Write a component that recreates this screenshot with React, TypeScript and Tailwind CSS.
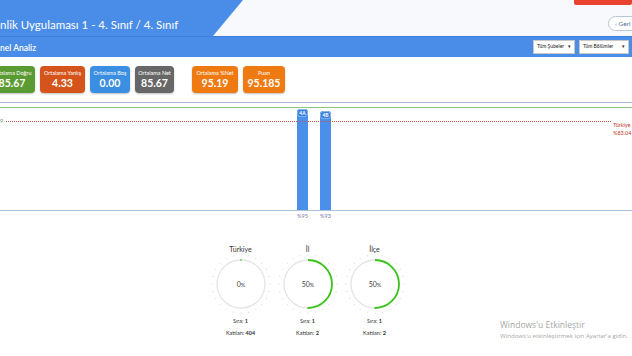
import { FC } from "react";

interface IStat {
  label: string;
  value: string;
  bg: string;
  w: string;
}

const stats: IStat[] = [
  { label: "Ortalama Doğru", value: "85.67", bg: "bg-[#5b9b33]", w: "w-[46px]" },
  { label: "Ortalama Yanlış", value: "4.33", bg: "bg-[#d5541b]", w: "w-[45px]" },
  { label: "Ortalama Boş", value: "0.00", bg: "bg-[#3b8fe2]", w: "w-[40px]" },
  { label: "Ortalama Net", value: "85.67", bg: "bg-[#676767]", w: "w-[39px]" },
];

const stats2: IStat[] = [
  { label: "Ortalama %Net", value: "95.19", bg: "bg-[#f07a12]", w: "w-[46px]" },
  { label: "Puan", value: "95.185", bg: "bg-[#f07a12]", w: "w-[42px]" },
];

const StatCard: FC<IStat> = ({ label, value, bg, w }) => (
  <div
    className={`${bg} ${w} h-[27px] shrink-0 rounded-[4px] flex flex-col items-center justify-center text-white shadow-[0_1px_2px_rgba(0,0,0,0.25)]`}
  >
    <span className="text-[5.5px] leading-[8px] whitespace-nowrap">{label}</span>
    <span className="text-[10.5px] leading-[13px] font-bold">{value}</span>
  </div>
);

interface IGauge {
  label: string;
  pct: number;
  sira: string;
  katilan: string;
}

const Gauge: FC<IGauge> = ({ label, pct, sira, katilan }) => {
  const r = 24;
  const c = 2 * Math.PI * r;
  const ticks = Array.from({ length: 24 }, (_, i) => i * 15);
  return (
    <div className="w-[67px] flex flex-col items-center text-[#333]">
      <div className="text-[7px] leading-[10px]">{label}</div>
      <svg width="64" height="64" viewBox="0 0 64 64" className="-mt-[2px]">
        {ticks.map((a) => (
          <line
            key={a}
            x1="32"
            y1="2"
            x2="32"
            y2="3.5"
            stroke="#dcdcdc"
            strokeWidth="0.8"
            transform={`rotate(${a} 32 32)`}
          />
        ))}
        <circle cx="32" cy="32" r={r} fill="none" stroke="#e6e6e6" strokeWidth="1.4" />
        {pct > 0 ? (
          <circle
            cx="32"
            cy="32"
            r={r}
            fill="none"
            stroke="#3cc31c"
            strokeWidth="1.8"
            strokeDasharray={`${(c * pct) / 100} ${c}`}
            transform="rotate(-90 32 32)"
          />
        ) : (
          <line x1="32" y1="7" x2="32" y2="9" stroke="#3cc31c" strokeWidth="1" />
        )}
        <text x="32" y="34.5" textAnchor="middle" fontSize="7" fill="#444" fontFamily="Lato, sans-serif">
          {pct}
          <tspan fontSize="5.5">%</tspan>
        </text>
      </svg>
      <div className="mt-[1px] text-[5.5px] leading-[8px]">
        Sıra: <b>{sira}</b>
      </div>
      <div className="mt-[4px] text-[5.5px] leading-[8px]">
        Katılan: <b>{katilan}</b>
      </div>
    </div>
  );
};

const Bar: FC<{ name: string; h: string }> = ({ name, h }) => (
  <div className={`w-[11px] ${h} bg-[#4a8fea] rounded-t-[3px] flex flex-col items-center`}>
    <div className="w-[11px] h-[8px] rounded-[3px] bg-[#3b7fdc] border border-[#7fb0f0] text-white text-[5px] leading-[6px] font-bold text-center">
      {name}
    </div>
  </div>
);

export default function App() {
  return (
    <div className="relative w-[632px] h-[356px] overflow-hidden bg-white font-['Lato',sans-serif]">
      {/* title bar */}
      <div className="h-[36px] flex bg-[#f7f9fc]">
        <div className="w-[243px] shrink-0 bg-[#4a8de8] [clip-path:polygon(0_0,100%_0,calc(100%-30px)_100%,0_100%)] flex items-center">
          <span className="text-white text-[11.5px] leading-none pt-[14px] whitespace-nowrap">
            nlik Uygulaması 1 - 4. Sınıf / 4. Sınıf
          </span>
        </div>
        <div className="flex-1 flex flex-col items-end">
          <div className="w-[58px] h-[5px] bg-[#e8432f] rounded-b-[2px]" />
          <div className="mt-[11px] -mr-[18px] w-[42px] h-[15px] rounded-full border border-[#b9c6d3] bg-white flex items-center pl-[6px] text-[6.5px] text-[#4f6f8f]">
            ‹&nbsp;Geri
          </div>
        </div>
      </div>

      {/* sub bar */}
      <div className="h-[21px] bg-[#4a8de8] border-t border-[#3f80dc] flex items-center justify-between pr-[3px]">
        <span className="text-white text-[8.5px] font-semibold pt-[2px]">nel Analiz</span>
        <div className="flex gap-[4px]">
          <div className="w-[42px] h-[14px] bg-white border border-[#c8c8c8] flex items-center justify-between px-[3px] text-[5px] text-[#222]">
            Tüm Şubeler <span className="text-[5px]">▾</span>
          </div>
          <div className="w-[50px] h-[14px] bg-white border border-[#c8c8c8] flex items-center justify-between px-[3px] text-[5px] text-[#222]">
            Tüm Bölümler <span className="text-[5px]">▾</span>
          </div>
        </div>
      </div>

      {/* stat cards */}
      <div className="pt-[9px] pb-[9px] border-b border-[#a4bbd9] flex">
        <div className="-ml-[11px] flex gap-[5px]">
          {stats.map((s) => (
            <StatCard key={s.label} {...s} />
          ))}
        </div>
        <div className="ml-[18px] flex gap-[5px]">
          {stats2.map((s) => (
            <StatCard key={s.label} {...s} />
          ))}
        </div>
      </div>

      {/* chart */}
      <div className="relative mt-[4px] h-[104px] border-t border-[#8fc27a] border-b border-b-[#a9c3e2] flex items-end pl-[297px] gap-[12px]">
        <Bar name="4A" h="h-[101px]" />
        <Bar name="4B" h="h-[99px]" />
        <div className="absolute left-0 top-[9px] text-[5.5px] text-[#4e9a6e]">9</div>
        <div className="absolute left-[6px] right-[21px] top-[13px] border-t border-dotted border-[#c6534d]" />
        <div className="absolute left-[613px] top-[13px] text-[5.5px] leading-[8px] text-[#c0392b] whitespace-nowrap">
          Türkiye
          <br />
          %83.04
        </div>
      </div>
      <div className="flex pl-[297px] gap-[12px] text-[5.5px] leading-[10px] text-[#7d76a6]">
        <span className="w-[11px] text-center">%95</span>
        <span className="w-[11px] text-center">%93</span>
      </div>

      {/* gauges */}
      <div className="mt-[23px] flex pl-[207px]">
        <Gauge label="Türkiye" pct={0} sira="1" katilan="404" />
        <Gauge label="İl" pct={50} sira="1" katilan="2" />
        <Gauge label="İlçe" pct={50} sira="1" katilan="2" />
      </div>

      {/* activation watermark */}
      <div className="absolute left-[500px] top-[319px] text-[#a8a8a8] font-['Open_Sans',sans-serif]">
        <div className="text-[8.5px] leading-[12px]">Windows'u Etkinleştir</div>
        <div className="text-[6.1px] leading-[9px] whitespace-nowrap">Windows'u etkinleştirmek için Ayarlar'a gidin.</div>
      </div>
    </div>
  );
}
